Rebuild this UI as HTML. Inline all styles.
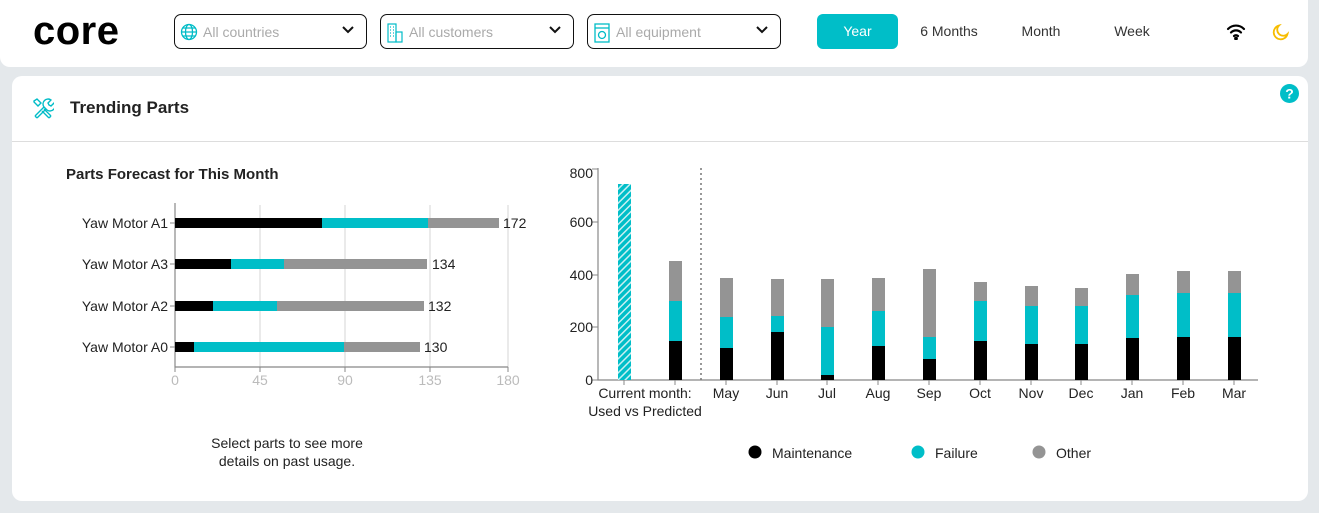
<!DOCTYPE html>
<html><head><meta charset="utf-8"><style>
*{margin:0;padding:0;box-sizing:border-box}
body{width:1319px;height:513px;background:#e4e8eb;font-family:"Liberation Sans",sans-serif;position:relative;overflow:hidden;color:#222}
.hdr{position:absolute;left:0;top:0;width:1308px;height:67px;background:#fff;border-radius:0 0 10px 10px}
.logo{position:absolute;left:33px;top:9px;font-size:40px;font-weight:bold;letter-spacing:0.5px;color:#000}
.sel{position:absolute;top:14px;height:35px;border:1.5px solid #111;border-radius:7px;font-size:14px;color:#aaa;padding:9px 0 0 28px}
.sel svg.ic{position:absolute;left:5px;top:8px}
.sel .ch{position:absolute;right:12px;top:11px}
.tab{position:absolute;top:14px;height:35px;font-size:14px;color:#333;line-height:35px;text-align:center}
.card{position:absolute;left:12px;top:76px;width:1296px;height:425px;background:#fff;border-radius:10px}
.title{position:absolute;left:58px;top:22px;font-size:17px;font-weight:bold;color:#222}
.sep{position:absolute;left:0;top:65px;width:1296px;height:1px;background:#ddd}
</style></head><body>
<div class="hdr">
<div class="logo">core</div>
<div class="sel" style="left:174px;width:193px"><svg class="ic" width="18" height="18" viewBox="0 0 18 18" fill="none" stroke="#00bcc7" stroke-width="1.3"><circle cx="9" cy="9" r="7.5"/><ellipse cx="9" cy="9" rx="3.5" ry="7.5"/><path d="M1.5 9h15M3 5h12M3 13h12"/></svg>All countries<svg class="ch" width="12" height="8" viewBox="0 0 12 8"><path d="M1 1l5 5 5-5" stroke="#111" stroke-width="2" fill="none"/></svg></div>
<div class="sel" style="left:380px;width:194px"><svg class="ic" width="18" height="20" viewBox="0 0 18 20" fill="none" stroke="#00bcc7" stroke-width="1.2"><rect x="2" y="1" width="8" height="18"/><rect x="10" y="9" width="6" height="10"/><path d="M4 4h1M7 4h1M4 7h1M7 7h1M4 10h1M7 10h1M4 13h1M7 13h1"/></svg>All customers<svg class="ch" width="12" height="8" viewBox="0 0 12 8"><path d="M1 1l5 5 5-5" stroke="#111" stroke-width="2" fill="none"/></svg></div>
<div class="sel" style="left:587px;width:194px"><svg class="ic" width="18" height="20" viewBox="0 0 18 20" fill="none" stroke="#00bcc7" stroke-width="1.3"><rect x="2" y="1" width="14" height="18"/><path d="M2 5h14"/><circle cx="9" cy="12" r="3.5"/></svg>All equipment<svg class="ch" width="12" height="8" viewBox="0 0 12 8"><path d="M1 1l5 5 5-5" stroke="#111" stroke-width="2" fill="none"/></svg></div>
<div class="tab" style="left:817px;width:81px;background:#00bec8;color:#fff;border-radius:6px">Year</div>
<div class="tab" style="left:910px;width:78px">6 Months</div>
<div class="tab" style="left:1010px;width:62px">Month</div>
<div class="tab" style="left:1100px;width:64px">Week</div>
<svg style="position:absolute;left:1226px;top:24px" width="20" height="16" viewBox="0 0 20 16" fill="none" stroke="#000" stroke-width="2.2" stroke-linecap="round"><path d="M2 5a11 11 0 0 1 16 0M5 8.5a7 7 0 0 1 10 0M8 12a3 3 0 0 1 4 0"/><circle cx="10" cy="14.5" r="0.8" fill="#000"/></svg>
<svg style="position:absolute;left:1272px;top:24px" width="17" height="17" viewBox="0 0 17 17"><path d="M7 1.5a7 7 0 1 0 8.5 8.5A6 6 0 0 1 7 1.5z" fill="none" stroke="#f7bd00" stroke-width="1.8"/></svg>
</div>
<div class="card">
<svg style="position:absolute;left:20px;top:21px" width="22" height="22" viewBox="0 0 22 22" fill="none" stroke="#00bcc7" stroke-width="1.4"><path d="M3 19l9-9M5 21l9-9M3 19l2 2"/><path d="M12 10a5 5 0 0 1 7-7l-3 3 1 2 2 1 3-3a5 5 0 0 1-7 7z"/><path d="M19 19l-7-7M17 21l-7-7M19 19l-2 2M2 4l3-2 4 4-3 3-4-4z"/></svg>
<div class="title">Trending Parts</div>
<div class="sep"></div>
<svg style="position:absolute;left:1268px;top:8px" width="19" height="19" viewBox="0 0 19 19"><circle cx="9.5" cy="9.5" r="9.5" fill="#00bec8"/><text x="9.5" y="14.5" font-size="14" font-weight="bold" fill="#fff" text-anchor="middle" font-family="Liberation Sans">?</text></svg>
</div>
<svg style="position:absolute;left:0;top:0" width="1319" height="513" font-family="Liberation Sans" font-size="14">
<text x="66" y="179" font-size="15" font-weight="bold" fill="#222">Parts Forecast for This Month</text>
<g stroke="#ddd" stroke-width="1.2"><path d="M260 205V367M345 205V367M430 205V367M508 205V367"/></g>
<path d="M175 203V367H508" stroke="#888" stroke-width="1.2" fill="none"/>
<g stroke="#888"><path d="M170 223h5M170 264h5M170 306h5M170 347h5M175 367v5M260 367v5M345 367v5M430 367v5M508 367v5"/></g>
<g>
<rect x="175" y="218" width="147" height="10" fill="#000"/><rect x="322" y="218" width="106" height="10" fill="#00bec8"/><rect x="428" y="218" width="71" height="10" fill="#949494"/>
<rect x="175" y="259" width="56" height="10" fill="#000"/><rect x="231" y="259" width="53" height="10" fill="#00bec8"/><rect x="284" y="259" width="143" height="10" fill="#949494"/>
<rect x="175" y="301" width="38" height="10" fill="#000"/><rect x="213" y="301" width="64" height="10" fill="#00bec8"/><rect x="277" y="301" width="147" height="10" fill="#949494"/>
<rect x="175" y="342" width="19" height="10" fill="#000"/><rect x="194" y="342" width="150" height="10" fill="#00bec8"/><rect x="344" y="342" width="76" height="10" fill="#949494"/>
</g>
<g text-anchor="end" fill="#222"><text x="168" y="228">Yaw Motor A1</text><text x="168" y="269">Yaw Motor A3</text><text x="168" y="311">Yaw Motor A2</text><text x="168" y="352">Yaw Motor A0</text></g>
<g fill="#222"><text x="503" y="228">172</text><text x="432" y="269">134</text><text x="428" y="311">132</text><text x="424" y="352">130</text></g>
<g fill="#bbb" text-anchor="middle"><text x="175" y="385">0</text><text x="260" y="385">45</text><text x="345" y="385">90</text><text x="430" y="385">135</text><text x="508" y="385">180</text></g>
<g fill="#222" text-anchor="middle"><text x="287" y="448">Select parts to see more</text><text x="287" y="466">details on past usage.</text></g>

<defs><pattern id="h" width="5" height="5" patternUnits="userSpaceOnUse" patternTransform="rotate(45)"><rect width="5" height="5" fill="#00bec8"/><rect width="1.5" height="5" fill="#c8f0f2"/></pattern></defs>
<path d="M598 168V380H1258" stroke="#888" stroke-width="1.2" fill="none"/>
<g stroke="#888"><path d="M592 169h6M592 222h6M592 275h6M592 327h6M592 380h6"/></g>
<path d="M701 168V380" stroke="#777" stroke-width="1.5" stroke-dasharray="2,3"/>
<g fill="#222" text-anchor="end"><text x="593" y="178">800</text><text x="593" y="227">600</text><text x="593" y="280">400</text><text x="593" y="332">200</text><text x="593" y="385">0</text></g>
<rect x="618" y="184" width="13" height="196" fill="url(#h)"/>
<g fill="#222" text-anchor="middle"><text x="645" y="398">Current month:</text><text x="645" y="416">Used vs Predicted</text>
<text x="726" y="398">May</text><text x="777" y="398">Jun</text><text x="827" y="398">Jul</text><text x="878" y="398">Aug</text><text x="929" y="398">Sep</text><text x="980" y="398">Oct</text><text x="1031" y="398">Nov</text><text x="1081" y="398">Dec</text><text x="1132" y="398">Jan</text><text x="1183" y="398">Feb</text><text x="1234" y="398">Mar</text></g>
<circle cx="755" cy="452" r="6.5" fill="#000"/><text x="772" y="458" fill="#222">Maintenance</text>
<circle cx="918" cy="452" r="6.5" fill="#00bec8"/><text x="935" y="458" fill="#222">Failure</text>
<circle cx="1039" cy="452" r="6.5" fill="#949494"/><text x="1056" y="458" fill="#222">Other</text>
<g>
<rect x="669" y="261" width="13" height="40" fill="#949494"/><rect x="669" y="301" width="13" height="40" fill="#00bec8"/><rect x="669" y="341" width="13" height="39" fill="#000"/>
<rect x="720" y="278" width="13" height="39" fill="#949494"/><rect x="720" y="317" width="13" height="31" fill="#00bec8"/><rect x="720" y="348" width="13" height="32" fill="#000"/>
<rect x="771" y="279" width="13" height="37" fill="#949494"/><rect x="771" y="316" width="13" height="16" fill="#00bec8"/><rect x="771" y="332" width="13" height="48" fill="#000"/>
<rect x="821" y="279" width="13" height="48" fill="#949494"/><rect x="821" y="327" width="13" height="48" fill="#00bec8"/><rect x="821" y="375" width="13" height="5" fill="#000"/>
<rect x="872" y="278" width="13" height="33" fill="#949494"/><rect x="872" y="311" width="13" height="35" fill="#00bec8"/><rect x="872" y="346" width="13" height="34" fill="#000"/>
<rect x="923" y="269" width="13" height="68" fill="#949494"/><rect x="923" y="337" width="13" height="22" fill="#00bec8"/><rect x="923" y="359" width="13" height="21" fill="#000"/>
<rect x="974" y="282" width="13" height="19" fill="#949494"/><rect x="974" y="301" width="13" height="40" fill="#00bec8"/><rect x="974" y="341" width="13" height="39" fill="#000"/>
<rect x="1025" y="286" width="13" height="20" fill="#949494"/><rect x="1025" y="306" width="13" height="38" fill="#00bec8"/><rect x="1025" y="344" width="13" height="36" fill="#000"/>
<rect x="1075" y="288" width="13" height="18" fill="#949494"/><rect x="1075" y="306" width="13" height="38" fill="#00bec8"/><rect x="1075" y="344" width="13" height="36" fill="#000"/>
<rect x="1126" y="274" width="13" height="21" fill="#949494"/><rect x="1126" y="295" width="13" height="43" fill="#00bec8"/><rect x="1126" y="338" width="13" height="42" fill="#000"/>
<rect x="1177" y="271" width="13" height="22" fill="#949494"/><rect x="1177" y="293" width="13" height="44" fill="#00bec8"/><rect x="1177" y="337" width="13" height="43" fill="#000"/>
<rect x="1228" y="271" width="13" height="22" fill="#949494"/><rect x="1228" y="293" width="13" height="44" fill="#00bec8"/><rect x="1228" y="337" width="13" height="43" fill="#000"/>
</g>
<g stroke="#888"><path d="M624 380v5M675 380v5M726 380v5M777 380v5M827 380v5M878 380v5M929 380v5M980 380v5M1031 380v5M1081 380v5M1132 380v5M1183 380v5M1234 380v5"/></g>
</svg>
</body></html>
